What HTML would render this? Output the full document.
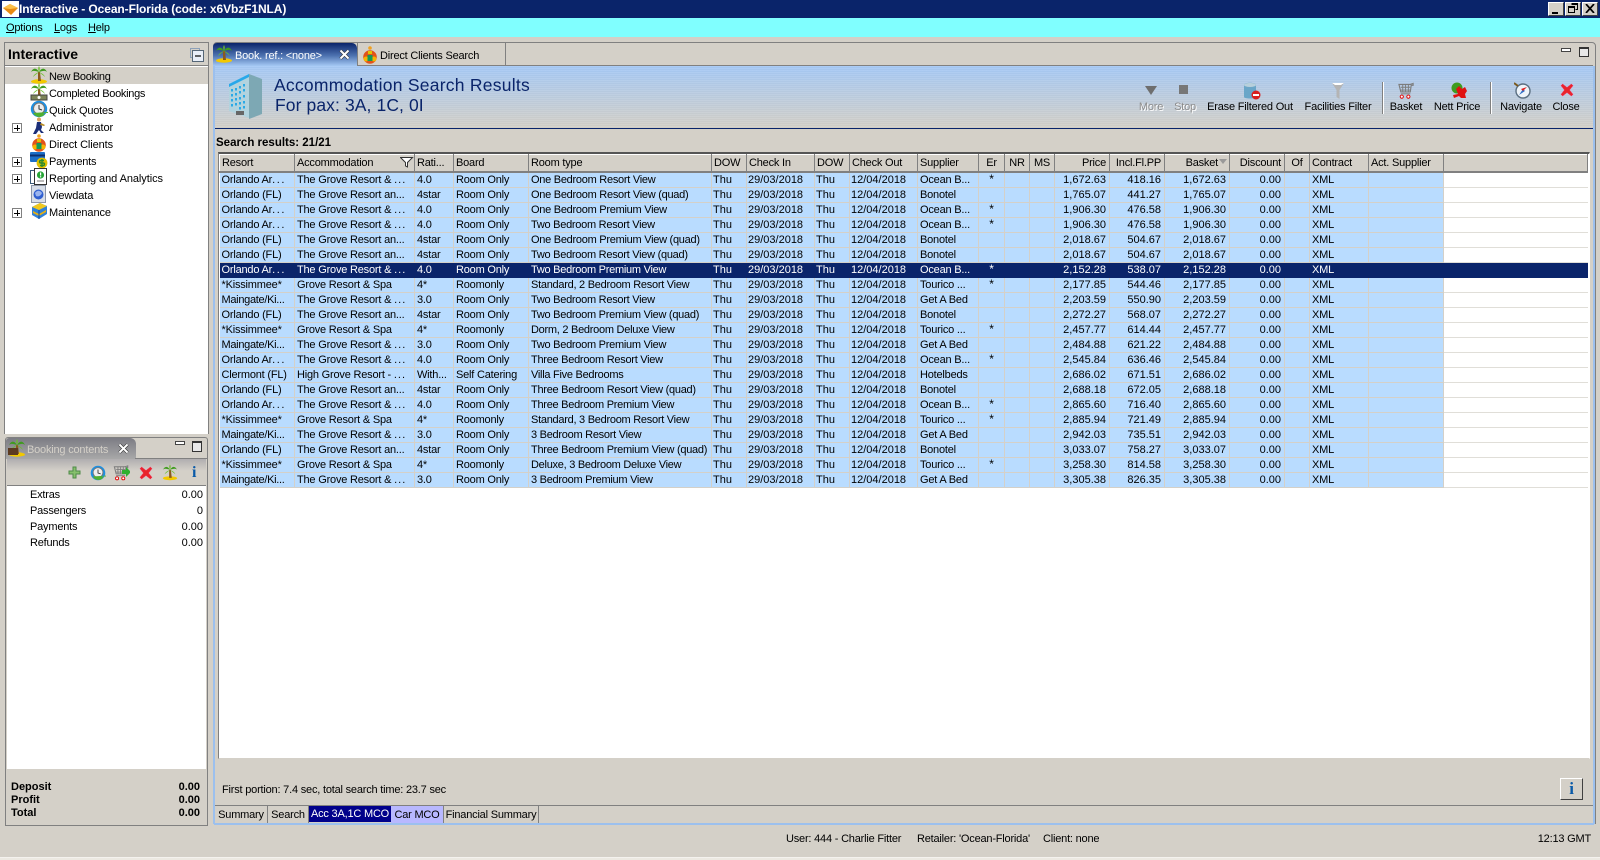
<!DOCTYPE html>
<html><head><meta charset="utf-8"><title>Interactive - Ocean-Florida</title>
<style>
html,body{margin:0;padding:0}
body{width:1600px;height:860px;overflow:hidden;background:#d4d0c8;position:relative;font:11px/15px "Liberation Sans",sans-serif;color:#000;letter-spacing:-.2px}
.a{position:absolute;white-space:nowrap}
u{text-decoration:underline}
.tree{left:49px;height:17px;line-height:17px}
.ic{position:absolute}
.pm{position:absolute;left:12px;width:8px;height:8px;border:1px solid #808080;background:#fff}
.pm:before{content:"";position:absolute;left:1px;right:1px;top:3.5px;height:1px;background:#000}
.pm:after{content:"";position:absolute;top:1px;bottom:1px;left:3.5px;width:1px;background:#000}
.wb{position:absolute;top:2px;width:14px;height:12px;background:#d4d0c8;border:1px solid;border-color:#fff #404040 #404040 #fff}
table{border-collapse:collapse;table-layout:fixed;position:absolute;left:219px;top:154px;width:1368px}
th,td{padding:0 2px;overflow:hidden;white-space:nowrap;text-align:left;font-weight:normal}
th{height:16px;background:#d4d0c8;border-right:1px solid #808080;border-left:1px solid #fff;border-top:1px solid #fff;border-bottom:2px solid #808080;line-height:15px;padding:0 2px}
td{height:14px;line-height:14px;background:#b9dcff;border-right:1px solid #d4d0c8;border-bottom:1px solid #d4d0c8}
td:last-child{background:#fff;border-bottom-color:#e0ded8;border-right-color:#fff}
tr.s td{background:#0a246a;color:#fff;border-color:#0a246a}
td:nth-child(n+6):nth-child(-n+9),td:nth-child(n+14):nth-child(-n+17){letter-spacing:0}
td:nth-child(n+6):nth-child(-n+9){padding-left:1px}
td:nth-child(5){letter-spacing:-.27px}
td:nth-child(n+14):nth-child(-n+17),th.r{text-align:right;padding-right:3px}
td:nth-child(11){text-align:center;vertical-align:top;line-height:13px;font-size:12px}
th.c{text-align:center}
td s{text-decoration:none;letter-spacing:1px}
td:first-child s{letter-spacing:1.6px}
.vt{position:absolute;right:3px}
.btab{position:absolute;top:805px;height:17px;line-height:17px;text-align:center;border-right:1px solid #808080}
.tb{position:absolute;top:100px;line-height:15px;text-align:center;transform:translateX(-50%);white-space:nowrap}
.dis{color:#8c8c8c;text-shadow:1px 1px 0 #fff}
.sep{position:absolute;top:82px;height:32px;width:1px;background:#808080;border-right:1px solid #fff}
.b{font-weight:bold;letter-spacing:0}
</style></head><body>
<svg width="0" height="0" style="position:absolute">
<defs>
<symbol id="palm" viewBox="0 0 18 18"><ellipse cx="9" cy="15.5" rx="8" ry="2.2" fill="#f2c800"/><path d="M8 6l2 0 1 9-3 0z" fill="#8a5a1e"/><path d="M9 6C6 1 3 2 1 6 3 4 6 5 9 6zM9 6C12 1 15 2 17 6 15 4 12 5 9 6z" fill="#3f9b1f"/><path d="M9 6C7 7 4 8 3 11 5 9 7 8 9 6zM9 6C11 7 14 8 15 11 13 9 11 8 9 6zM9 6C8 3 8 2 9 0 10 2 10 3 9 6z" fill="#6cc02c"/></symbol>
<symbol id="clock" viewBox="0 0 18 18"><circle cx="9" cy="9" r="8.2" fill="#1e8fe0"/><circle cx="9" cy="8.5" r="5.5" fill="#eee" stroke="#777"/><path d="M9 5v4l3 1" stroke="#333" fill="none"/><path d="M3 13c3 5 9 5 12 1l-2-1h5v-1" fill="#50b030"/></symbol>
<symbol id="man" viewBox="0 0 18 18"><circle cx="9" cy="2.5" r="2" fill="#d9a05c"/><path d="M7 5h4l1 5-1 3 3 3h-3l-2-3-3 4H3l3-6z" fill="#1b2e78"/><path d="M11 6l4 2-1 1-4-1z" fill="#b88a20"/></symbol>
<symbol id="client" viewBox="0 0 18 18"><circle cx="9" cy="2" r="1.8" fill="#f0a020"/><circle cx="9" cy="11" r="6.8" fill="#e2531a"/><circle cx="5" cy="13" r="2.5" fill="#f6b400"/><circle cx="13" cy="13" r="2.5" fill="#f6b400"/><rect x="6.5" y="9" width="5" height="6" fill="#139a5a"/><rect x="7" y="5" width="4" height="3" fill="#e2c400"/></symbol>
<symbol id="pay" viewBox="0 0 18 18"><rect x="0" y="1" width="15" height="10" rx="1" fill="#1c6fc8"/><rect x="0" y="3.5" width="15" height="2" fill="#0b2f70"/><circle cx="12" cy="12" r="5.4" fill="#e0c000"/><path d="M14 9.5h-3c-2 0-2 2.5 0 2.5h2c2 0 2 2.5 0 2.5h-3M12 8v8" stroke="#2d8a2d" stroke-width="1.4" fill="none"/></symbol>
<symbol id="rep" viewBox="0 0 18 18"><rect x="0.5" y="2.5" width="9" height="13" fill="#fff" stroke="#3a5a78"/><rect x="4.5" y="0.5" width="12" height="16" fill="#fff" stroke="#333"/><circle cx="10.5" cy="7" r="3.6" fill="#27a536"/><rect x="10" y="4.5" width="1.2" height="3" fill="#fff"/><rect x="10" y="8.2" width="1.2" height="1.2" fill="#fff"/><path d="M7 13h7" stroke="#777"/></symbol>
<symbol id="view" viewBox="0 0 18 18"><rect x="1.5" y="0.5" width="14" height="17" fill="#d8dee8" stroke="#8c96a8"/><circle cx="8.5" cy="9.5" r="5" fill="#2f5fd0"/><path d="M5 8c2-3 5-3 7 0-1 3-4 4-6 3z" fill="#9ab4ee"/></symbol>
<symbol id="maint" viewBox="0 0 18 18"><path d="M2 5l8-4 7 3v8l-8 5-7-4z" fill="#2f80d8"/><path d="M2 5l7 3 8-4-7-3z" fill="#f0c81e"/><path d="M3 9l6 3 7-4v2l-7 4-6-3z" fill="#e8b010"/><path d="M9 8v9" stroke="#0c4a9a"/></symbol>
<symbol id="cash" viewBox="0 0 18 18"><rect x="1" y="12" width="16" height="5" fill="#7c8458" stroke="#444"/><circle cx="9" cy="14.5" r="1.5" fill="#fff"/></symbol>
<symbol id="x" viewBox="0 0 16 16"><path d="M3 1l5 4 5-4 2 2-4 5 4 5-2 2-5-4-5 4-2-2 4-5-4-5z" fill="#e8252c" stroke="#f48" stroke-width=".4"/></symbol>
<symbol id="cart" viewBox="0 0 18 18"><path d="M1 2h12l3-1v2l-2 0-1 7H3z" fill="none" stroke="#7d7d7d" stroke-width="1.2"/><path d="M3 5h10M5 2v8M8 2v8M11 2v8M3 8h10" stroke="#7d7d7d"/><path d="M3 12h10" stroke="#7d7d7d"/><circle cx="4" cy="15" r="1.7" fill="#fff" stroke="#e00000"/><circle cx="11" cy="15" r="1.7" fill="#fff" stroke="#e00000"/></symbol>
<symbol id="bstack" viewBox="0 0 34 47"><path d="M1 11L21 1v44L1 38z" fill="#b2d3de"/><path d="M21 1l13 5v35l-13 5z" fill="#7da8b4"/><path d="M1 11L21 1v3L1 14z" fill="#28a8ea"/><g fill="#2aa9e6"><rect x="3" y="16" width="2" height="2.5"/><rect x="7" y="15" width="2" height="2.5"/><rect x="11" y="13" width="2" height="2.5"/><rect x="15" y="11" width="2" height="2.5"/><rect x="3" y="21" width="2" height="2.5"/><rect x="7" y="20" width="2" height="2.5"/><rect x="11" y="18" width="2" height="2.5"/><rect x="15" y="16" width="2" height="2.5"/><rect x="3" y="26" width="2" height="2.5"/><rect x="7" y="25" width="2" height="2.5"/><rect x="11" y="24" width="2" height="2.5"/><rect x="15" y="22" width="2" height="2.5"/><rect x="3" y="31" width="2" height="2.5"/><rect x="7" y="30" width="2" height="2.5"/><rect x="11" y="29" width="2" height="2.5"/><rect x="15" y="28" width="2" height="2.5"/><rect x="15" y="33" width="2" height="2.5"/><rect x="11" y="34" width="2" height="2.5"/></g><path d="M8 38h8v4H8z" fill="#666"/></symbol>
</defs></svg>

<!-- title bar -->
<div class="a" style="left:0;top:0;width:1600px;height:18px;background:#0a246a"></div>
<svg class="ic" style="left:2px;top:1px" width="17" height="16" viewBox="0 0 17 16"><rect width="17" height="16" fill="#fff"/><path d="M1 7l7-4 8 4-7 7z" fill="#e88a12"/><path d="M1 7l7-4 8 4-8 1z" fill="#fbc04a"/></svg>
<div class="a" style="left:19px;top:2px;line-height:15px;color:#fff;font-weight:bold;font-size:12px;letter-spacing:-.09px">Interactive - Ocean-Florida (code: x6VbzF1NLA)</div>
<div class="wb" style="left:1548px"><div style="position:absolute;left:3px;bottom:1px;width:6px;height:2px;background:#000"></div></div>
<div class="wb" style="left:1565px"><svg style="position:absolute;left:2px;top:0" width="10" height="10"><path d="M3.5 .5h6v6h-2M.5 3.5h6v6h-6zM.5 4.5h6M3.5 1.5h6" fill="none" stroke="#000"/></svg></div>
<div class="wb" style="left:1582px"><svg style="position:absolute;left:2px;top:1px" width="10" height="9"><path d="M1 0l8 9M9 0l-8 9" stroke="#000" stroke-width="1.7"/></svg></div>

<!-- menu -->
<div class="a" style="left:0;top:18px;width:1600px;height:19px;background:#80ffff"></div>
<div class="a" style="left:6px;top:21px"><u>O</u>ptions</div>
<div class="a" style="left:54px;top:21px"><u>L</u>ogs</div>
<div class="a" style="left:88px;top:21px"><u>H</u>elp</div>

<!-- left top panel -->
<div class="a" style="left:4px;top:42px;width:203px;height:391px;background:#fff;border:1px solid #808080;border-bottom:0"></div>
<div class="a" style="left:5px;top:43px;width:203px;height:22px;background:#d4d0c8;border-bottom:1px solid #808080"></div>
<div class="a" style="left:8px;top:46px;line-height:17px;font-weight:bold;font-size:14px;letter-spacing:0">Interactive</div>
<svg class="ic" style="left:190px;top:48px" width="14" height="14"><path d="M.5.5h9v9h-9z" fill="#d4d0c8" stroke="#8ca0b8"/><path d="M2.5 2.5h11v11h-11z" fill="#e8eef8" stroke="#567"/><path d="M5 8h6" stroke="#000" stroke-width="1.2"/></svg>
<div class="a" style="left:5px;top:67px;width:203px;height:17px;background:#d4d0c8"></div>
<svg class="ic" style="left:30px;top:66px" width="18" height="18"><use href="#palm"/></svg>
<svg class="ic" style="left:30px;top:83px" width="18" height="18"><use href="#palm"/><use href="#cash"/></svg>
<svg class="ic" style="left:30px;top:100px" width="18" height="18"><use href="#clock"/></svg>
<svg class="ic" style="left:30px;top:117px" width="18" height="18"><use href="#man"/></svg>
<svg class="ic" style="left:30px;top:134px" width="18" height="18"><use href="#client"/></svg>
<svg class="ic" style="left:30px;top:151px" width="18" height="18"><use href="#pay"/></svg>
<svg class="ic" style="left:30px;top:168px" width="18" height="18"><use href="#rep"/></svg>
<svg class="ic" style="left:30px;top:185px" width="18" height="18"><use href="#view"/></svg>
<svg class="ic" style="left:30px;top:202px" width="18" height="18"><use href="#maint"/></svg>
<div class="pm" style="top:123px"></div><div class="pm" style="top:157px"></div><div class="pm" style="top:174px"></div><div class="pm" style="top:208px"></div>
<div class="a tree" style="top:69px;letter-spacing:-.3px">New Booking</div>
<div class="a tree" style="top:86px;letter-spacing:-.3px">Completed Bookings</div>
<div class="a tree" style="top:103px">Quick Quotes</div>
<div class="a tree" style="top:120px;letter-spacing:-.05px">Administrator</div>
<div class="a tree" style="top:137px;letter-spacing:-.1px">Direct Clients</div>
<div class="a tree" style="top:154px">Payments</div>
<div class="a tree" style="top:171px;letter-spacing:-.07px">Reporting and Analytics</div>
<div class="a tree" style="top:188px;letter-spacing:-.1px">Viewdata</div>
<div class="a tree" style="top:205px;letter-spacing:-.1px">Maintenance</div>

<!-- left bottom panel -->
<div class="a" style="left:5px;top:437px;width:201px;height:387px;border:1px solid #808080;border-radius:3px 3px 0 0;background:#d4d0c8"></div>
<div class="a" style="left:6px;top:438px;width:130px;height:21px;background:linear-gradient(#7c7c84,#a8a8a8);border-radius:3px 6px 0 0"></div>
<div class="a" style="left:135px;top:458px;width:72px;height:1px;background:#808080"></div>
<svg class="ic" style="left:8px;top:439px" width="18" height="18"><use href="#palm"/><rect x="0" y="9" width="10" height="7" fill="#5c3a20"/></svg>
<div class="a" style="left:27px;top:443px;color:#d4d0c8">Booking contents</div>
<svg class="ic" style="left:118px;top:443px" width="11" height="11"><path d="M1.5 1.5l8 8M9.5 1.5l-8 8" stroke="#333" stroke-width="3.2"/><path d="M1.5 1.5l8 8M9.5 1.5l-8 8" stroke="#fff" stroke-width="2"/></svg>
<div class="a" style="left:175px;top:441px;width:8px;height:2px;border:1px solid #444;background:#fff"></div>
<div class="a" style="left:192px;top:441px;width:8px;height:8px;border:1px solid #333;border-top:2px solid #333;background:#e8e8e8"></div>
<div class="a" style="left:7px;top:459px;width:199px;height:26px;background:linear-gradient(#b0aeb0,#d4d0c8 45%);border-bottom:1px solid #808080"></div>
<svg class="ic" style="left:68px;top:466px" width="13" height="13"><path d="M5 1h3v4h4v3H8v4H5V8H1V5h4z" fill="#86c06c" stroke="#4e8a48"/></svg>
<svg class="ic" style="left:90px;top:465px" width="16" height="16"><use href="#clock"/></svg>
<svg class="ic" style="left:113px;top:465px" width="17" height="16"><use href="#cart"/><path d="M9 5h4V2l5 5-5 5V9H9z" fill="#2fb030" transform="translate(0,0)"/></svg>
<svg class="ic" style="left:139px;top:466px" width="14" height="14"><use href="#x"/></svg>
<svg class="ic" style="left:162px;top:464px" width="16" height="17"><use href="#palm"/></svg>
<div class="a" style="left:192px;top:464px;color:#0a5aa8;font:bold 16px/17px 'Liberation Serif',serif">i</div>
<div class="a" style="left:7px;top:486px;width:199px;height:283px;background:#fff"></div>
<div class="a" style="left:30px;top:488px">Extras</div><div class="a" style="right:1397px;top:488px;letter-spacing:0">0.00</div>
<div class="a" style="left:30px;top:504px">Passengers</div><div class="a" style="right:1397px;top:504px;letter-spacing:0">0</div>
<div class="a" style="left:30px;top:520px">Payments</div><div class="a" style="right:1397px;top:520px;letter-spacing:0">0.00</div>
<div class="a" style="left:30px;top:536px">Refunds</div><div class="a" style="right:1397px;top:536px;letter-spacing:0">0.00</div>
<div class="a b" style="left:11px;top:781px;line-height:13px">Deposit<br>Profit<br>Total</div>
<div class="a b" style="right:1400px;top:781px;line-height:13px;text-align:right">0.00<br>0.00<br>0.00</div>

<!-- main panel -->
<div class="a" style="left:213px;top:42px;width:1381px;height:780px;border:1px solid #808080;border-radius:4px 4px 0 0;background:#d4d0c8"></div>
<div class="a" style="left:214px;top:65px;width:1379px;height:1px;background:#808080"></div>
<div class="a" style="left:214px;top:823px;width:1380px;height:2px;background:#9cc0ee"></div>
<div class="a" style="left:1593px;top:66px;width:2px;height:758px;background:#9cc0ee"></div>
<div class="a" style="left:213px;top:66px;width:2px;height:758px;background:#9cc0ee"></div>
<!-- tabs -->
<div class="a" style="left:213px;top:43px;width:144px;height:23px;background:linear-gradient(#0a246a,#4d72b0 55%,#a4c8f4);border-radius:4px 5px 0 0"></div>
<div class="a" style="left:357px;top:43px;width:1px;height:23px;background:#808080"></div>
<div class="a" style="left:505px;top:43px;width:1px;height:22px;background:#808080"></div>
<svg class="ic" style="left:215px;top:45px" width="18" height="18"><use href="#palm"/></svg>
<div class="a" style="left:235px;top:49px;color:#fff">Book. ref.: &lt;none&gt;</div>
<svg class="ic" style="left:339px;top:49px" width="11" height="11"><path d="M1.5 1.5l8 8M9.5 1.5l-8 8" stroke="#333" stroke-width="3.2"/><path d="M1.5 1.5l8 8M9.5 1.5l-8 8" stroke="#fff" stroke-width="2"/></svg>
<svg class="ic" style="left:361px;top:46px" width="18" height="18"><use href="#client"/></svg>
<div class="a" style="left:380px;top:49px">Direct Clients Search</div>
<div class="a" style="left:1561px;top:48px;width:8px;height:2px;border:1px solid #444;background:#fff"></div>
<div class="a" style="left:1579px;top:47px;width:8px;height:7px;border:1px solid #333;border-top:2px solid #333;background:#e8e8e8"></div>
<!-- banner -->
<div class="a" style="left:215px;top:66px;width:1378px;height:62px;background:repeating-linear-gradient(rgba(255,255,255,.06) 0 1px,rgba(0,0,0,.015) 1px 2px),linear-gradient(#a6c9f5,#d4d0c8)"></div>
<div class="a" style="left:215px;top:128px;width:1378px;height:1px;background:#0a246a"></div>
<svg class="ic" style="left:228px;top:73px" width="34" height="47"><use href="#bstack"/></svg>
<div class="a" style="left:274px;top:75px;line-height:21px;font-size:17.5px;color:#0a246a;letter-spacing:.25px">Accommodation Search Results</div>
<div class="a" style="left:275px;top:95px;line-height:21px;font-size:17.5px;color:#0a246a;letter-spacing:.1px">For pax: 3A, 1C, 0I</div>
<!-- toolbar -->
<svg class="ic" style="left:1145px;top:84px" width="12" height="12"><path d="M0 2h12l-6 9z" fill="#6e6e6e"/></svg>
<div class="a" style="left:1179px;top:85px;width:9px;height:9px;background:#777"></div>
<svg class="ic" style="left:1244px;top:82px" width="17" height="18"><path d="M0 3c0-3 12-3 12 0v12c0 2-12 2-12 0z" fill="#6aa6c8"/><ellipse cx="6" cy="3" rx="6" ry="2" fill="#b8d0dc"/><circle cx="12" cy="13" r="4.5" fill="#d82020"/><rect x="9" y="12" width="6" height="2" fill="#fff"/></svg>
<svg class="ic" style="left:1332px;top:82px" width="12" height="18"><path d="M0 1h12L7.5 8v9l-3-2V8z" fill="#b4b4b4"/><path d="M0 1h12l-3 2H3z" fill="#fff"/></svg>
<svg class="ic" style="left:1398px;top:82px" width="17" height="18"><use href="#cart"/></svg>
<svg class="ic" style="left:1450px;top:82px" width="17" height="17"><circle cx="7" cy="6" r="5.5" fill="#3f9b1f"/><path d="M6 7l3-3 3 3 3-2 2 4-2 3 1 4h-5l-2-2-5 2-1-3 5-1z" fill="#e01010"/></svg>
<svg class="ic" style="left:1514px;top:82px" width="17" height="17"><circle cx="9" cy="9" r="7" fill="#eef4fa" stroke="#5a6e80" stroke-width="1.4"/><path d="M5 13l6-4-2-2z" fill="#2f6fc8"/><path d="M13 5l-4 4-2-2z" fill="#e02020"/><path d="M0 1l4 3" stroke="#7a5a20" stroke-width="2"/></svg>
<svg class="ic" style="left:1560px;top:83px" width="14" height="14"><use href="#x"/></svg>
<div class="a tb dis" style="left:1151px">More</div>
<div class="a tb dis" style="left:1185px">Stop</div>
<div class="a tb" style="left:1250px">Erase Filtered Out</div>
<div class="a tb" style="left:1338px">Facilities Filter</div>
<div class="sep" style="left:1382px"></div>
<div class="a tb" style="left:1406px">Basket</div>
<div class="a tb" style="left:1457px">Nett Price</div>
<div class="sep" style="left:1490px"></div>
<div class="a tb" style="left:1521px">Navigate</div>
<div class="a tb" style="left:1566px">Close</div>

<div class="a b" style="left:216px;top:136px;line-height:14px;font-size:11.5px">Search results: 21/21</div>
<!-- grid -->
<div class="a" style="left:218px;top:152px;width:1370px;height:604px;background:#fff;border:1px solid #808080;border-top:2px solid #555;border-right-color:#fff;border-bottom-color:#d4d0c8"></div>
<table>
<colgroup><col style="width:75px"><col style="width:120px"><col style="width:39px"><col style="width:75px"><col style="width:183px"><col style="width:35px"><col style="width:68px"><col style="width:35px"><col style="width:68px"><col style="width:61px"><col style="width:26px"><col style="width:25px"><col style="width:25px"><col style="width:55px"><col style="width:55px"><col style="width:65px"><col style="width:55px"><col style="width:25px"><col style="width:59px"><col style="width:75px"><col style="width:144px"></colgroup>
<thead><tr><th>Resort</th><th>Accommodation<svg style="position:absolute;left:180px;top:2px" width="14" height="11"><path d="M.5.5h12L7.5 5.5v4.5l-2-1V5.5z" fill="#fff" stroke="#333"/></svg></th><th>Rati...</th><th>Board</th><th>Room type</th><th>DOW</th><th>Check In</th><th>DOW</th><th>Check Out</th><th>Supplier</th><th class="c">Er</th><th class="c">NR</th><th class="c">MS</th><th class="r">Price</th><th class="r">Incl.Fl.PP</th><th class="r" style="padding-right:11px;position:relative">Basket<svg style="position:absolute;right:2px;top:4px" width="8" height="5"><path d="M0 0h8L4 5z" fill="#999"/></svg></th><th class="r">Discount</th><th class="c">Of</th><th>Contract</th><th>Act. Supplier</th><th></th></tr></thead>
<tbody>
<tr><td>Orlando Ar<s>...</s></td><td>The Grove Resort &amp; <s>...</s></td><td>4.0</td><td>Room Only</td><td>One Bedroom Resort View</td><td>Thu</td><td>29/03/2018</td><td>Thu</td><td>12/04/2018</td><td>Ocean B...</td><td>*</td><td></td><td></td><td>1,672.63</td><td>418.16</td><td>1,672.63</td><td>0.00</td><td></td><td>XML</td><td></td><td></td></tr>
<tr><td>Orlando (FL)</td><td>The Grove Resort an...</td><td>4star</td><td>Room Only</td><td>One Bedroom Resort View (quad)</td><td>Thu</td><td>29/03/2018</td><td>Thu</td><td>12/04/2018</td><td>Bonotel</td><td></td><td></td><td></td><td>1,765.07</td><td>441.27</td><td>1,765.07</td><td>0.00</td><td></td><td>XML</td><td></td><td></td></tr>
<tr><td>Orlando Ar<s>...</s></td><td>The Grove Resort &amp; <s>...</s></td><td>4.0</td><td>Room Only</td><td>One Bedroom Premium View</td><td>Thu</td><td>29/03/2018</td><td>Thu</td><td>12/04/2018</td><td>Ocean B...</td><td>*</td><td></td><td></td><td>1,906.30</td><td>476.58</td><td>1,906.30</td><td>0.00</td><td></td><td>XML</td><td></td><td></td></tr>
<tr><td>Orlando Ar<s>...</s></td><td>The Grove Resort &amp; <s>...</s></td><td>4.0</td><td>Room Only</td><td>Two Bedroom Resort View</td><td>Thu</td><td>29/03/2018</td><td>Thu</td><td>12/04/2018</td><td>Ocean B...</td><td>*</td><td></td><td></td><td>1,906.30</td><td>476.58</td><td>1,906.30</td><td>0.00</td><td></td><td>XML</td><td></td><td></td></tr>
<tr><td>Orlando (FL)</td><td>The Grove Resort an...</td><td>4star</td><td>Room Only</td><td>One Bedroom Premium View (quad)</td><td>Thu</td><td>29/03/2018</td><td>Thu</td><td>12/04/2018</td><td>Bonotel</td><td></td><td></td><td></td><td>2,018.67</td><td>504.67</td><td>2,018.67</td><td>0.00</td><td></td><td>XML</td><td></td><td></td></tr>
<tr><td>Orlando (FL)</td><td>The Grove Resort an...</td><td>4star</td><td>Room Only</td><td>Two Bedroom Resort View (quad)</td><td>Thu</td><td>29/03/2018</td><td>Thu</td><td>12/04/2018</td><td>Bonotel</td><td></td><td></td><td></td><td>2,018.67</td><td>504.67</td><td>2,018.67</td><td>0.00</td><td></td><td>XML</td><td></td><td></td></tr>
<tr class="s"><td>Orlando Ar<s>...</s></td><td>The Grove Resort &amp; <s>...</s></td><td>4.0</td><td>Room Only</td><td>Two Bedroom Premium View</td><td>Thu</td><td>29/03/2018</td><td>Thu</td><td>12/04/2018</td><td>Ocean B...</td><td>*</td><td></td><td></td><td>2,152.28</td><td>538.07</td><td>2,152.28</td><td>0.00</td><td></td><td>XML</td><td></td><td style="background:#0a246a"></td></tr>
<tr><td>*Kissimmee*</td><td>Grove Resort &amp; Spa</td><td>4*</td><td>Roomonly</td><td>Standard, 2 Bedroom Resort View</td><td>Thu</td><td>29/03/2018</td><td>Thu</td><td>12/04/2018</td><td>Tourico ...</td><td>*</td><td></td><td></td><td>2,177.85</td><td>544.46</td><td>2,177.85</td><td>0.00</td><td></td><td>XML</td><td></td><td></td></tr>
<tr><td style="letter-spacing:-.3px">Maingate/Ki...</td><td>The Grove Resort &amp; <s>...</s></td><td>3.0</td><td>Room Only</td><td>Two Bedroom Resort View</td><td>Thu</td><td>29/03/2018</td><td>Thu</td><td>12/04/2018</td><td>Get A Bed</td><td></td><td></td><td></td><td>2,203.59</td><td>550.90</td><td>2,203.59</td><td>0.00</td><td></td><td>XML</td><td></td><td></td></tr>
<tr><td>Orlando (FL)</td><td>The Grove Resort an...</td><td>4star</td><td>Room Only</td><td>Two Bedroom Premium View (quad)</td><td>Thu</td><td>29/03/2018</td><td>Thu</td><td>12/04/2018</td><td>Bonotel</td><td></td><td></td><td></td><td>2,272.27</td><td>568.07</td><td>2,272.27</td><td>0.00</td><td></td><td>XML</td><td></td><td></td></tr>
<tr><td>*Kissimmee*</td><td>Grove Resort &amp; Spa</td><td>4*</td><td>Roomonly</td><td>Dorm, 2 Bedroom Deluxe View</td><td>Thu</td><td>29/03/2018</td><td>Thu</td><td>12/04/2018</td><td>Tourico ...</td><td>*</td><td></td><td></td><td>2,457.77</td><td>614.44</td><td>2,457.77</td><td>0.00</td><td></td><td>XML</td><td></td><td></td></tr>
<tr><td style="letter-spacing:-.3px">Maingate/Ki...</td><td>The Grove Resort &amp; <s>...</s></td><td>3.0</td><td>Room Only</td><td>Two Bedroom Premium View</td><td>Thu</td><td>29/03/2018</td><td>Thu</td><td>12/04/2018</td><td>Get A Bed</td><td></td><td></td><td></td><td>2,484.88</td><td>621.22</td><td>2,484.88</td><td>0.00</td><td></td><td>XML</td><td></td><td></td></tr>
<tr><td>Orlando Ar<s>...</s></td><td>The Grove Resort &amp; <s>...</s></td><td>4.0</td><td>Room Only</td><td>Three Bedroom Resort View</td><td>Thu</td><td>29/03/2018</td><td>Thu</td><td>12/04/2018</td><td>Ocean B...</td><td>*</td><td></td><td></td><td>2,545.84</td><td>636.46</td><td>2,545.84</td><td>0.00</td><td></td><td>XML</td><td></td><td></td></tr>
<tr><td>Clermont (FL)</td><td>High Grove Resort - <s>...</s></td><td>With...</td><td>Self Catering</td><td>Villa Five Bedrooms</td><td>Thu</td><td>29/03/2018</td><td>Thu</td><td>12/04/2018</td><td>Hotelbeds</td><td></td><td></td><td></td><td>2,686.02</td><td>671.51</td><td>2,686.02</td><td>0.00</td><td></td><td>XML</td><td></td><td></td></tr>
<tr><td>Orlando (FL)</td><td>The Grove Resort an...</td><td>4star</td><td>Room Only</td><td>Three Bedroom Resort View (quad)</td><td>Thu</td><td>29/03/2018</td><td>Thu</td><td>12/04/2018</td><td>Bonotel</td><td></td><td></td><td></td><td>2,688.18</td><td>672.05</td><td>2,688.18</td><td>0.00</td><td></td><td>XML</td><td></td><td></td></tr>
<tr><td>Orlando Ar<s>...</s></td><td>The Grove Resort &amp; <s>...</s></td><td>4.0</td><td>Room Only</td><td>Three Bedroom Premium View</td><td>Thu</td><td>29/03/2018</td><td>Thu</td><td>12/04/2018</td><td>Ocean B...</td><td>*</td><td></td><td></td><td>2,865.60</td><td>716.40</td><td>2,865.60</td><td>0.00</td><td></td><td>XML</td><td></td><td></td></tr>
<tr><td>*Kissimmee*</td><td>Grove Resort &amp; Spa</td><td>4*</td><td>Roomonly</td><td>Standard, 3 Bedroom Resort View</td><td>Thu</td><td>29/03/2018</td><td>Thu</td><td>12/04/2018</td><td>Tourico ...</td><td>*</td><td></td><td></td><td>2,885.94</td><td>721.49</td><td>2,885.94</td><td>0.00</td><td></td><td>XML</td><td></td><td></td></tr>
<tr><td style="letter-spacing:-.3px">Maingate/Ki...</td><td>The Grove Resort &amp; <s>...</s></td><td>3.0</td><td>Room Only</td><td>3 Bedroom Resort View</td><td>Thu</td><td>29/03/2018</td><td>Thu</td><td>12/04/2018</td><td>Get A Bed</td><td></td><td></td><td></td><td>2,942.03</td><td>735.51</td><td>2,942.03</td><td>0.00</td><td></td><td>XML</td><td></td><td></td></tr>
<tr><td>Orlando (FL)</td><td>The Grove Resort an...</td><td>4star</td><td>Room Only</td><td>Three Bedroom Premium View (quad)</td><td>Thu</td><td>29/03/2018</td><td>Thu</td><td>12/04/2018</td><td>Bonotel</td><td></td><td></td><td></td><td>3,033.07</td><td>758.27</td><td>3,033.07</td><td>0.00</td><td></td><td>XML</td><td></td><td></td></tr>
<tr><td>*Kissimmee*</td><td>Grove Resort &amp; Spa</td><td>4*</td><td>Roomonly</td><td>Deluxe, 3 Bedroom Deluxe View</td><td>Thu</td><td>29/03/2018</td><td>Thu</td><td>12/04/2018</td><td>Tourico ...</td><td>*</td><td></td><td></td><td>3,258.30</td><td>814.58</td><td>3,258.30</td><td>0.00</td><td></td><td>XML</td><td></td><td></td></tr>
<tr><td style="letter-spacing:-.3px">Maingate/Ki...</td><td>The Grove Resort &amp; <s>...</s></td><td>3.0</td><td>Room Only</td><td>3 Bedroom Premium View</td><td>Thu</td><td>29/03/2018</td><td>Thu</td><td>12/04/2018</td><td>Get A Bed</td><td></td><td></td><td></td><td>3,305.38</td><td>826.35</td><td>3,305.38</td><td>0.00</td><td></td><td>XML</td><td></td><td></td></tr>
</tbody></table>
<!-- bottom -->
<div class="a" style="left:222px;top:783px">First portion: 7.4 sec, total search time: 23.7 sec</div>
<div class="a" style="left:1560px;top:778px;width:21px;height:20px;background:#d4d0c8;border:1px solid;border-color:#fff #404040 #404040 #fff;text-align:center;color:#0a5aa8;font:bold 17px/20px 'Liberation Serif',serif">i</div>
<div class="a" style="left:215px;top:805px;width:1378px;height:1px;background:#808080"></div>
<div class="btab" style="left:215px;width:52px;top:806px;line-height:18px">Summary</div>
<div class="btab" style="left:268px;width:40px;top:806px;line-height:18px">Search</div>
<div class="btab" style="left:309px;width:82px;top:806px;background:#00008b;color:#fff;height:16px;line-height:17px;border:0">Acc 3A,1C MCO</div>
<div class="btab" style="left:391px;width:52px;top:806px;background:#b8b8ff;line-height:18px">Car MCO</div>
<div class="btab" style="left:444px;width:94px;top:806px;line-height:18px">Financial Summary</div>
<!-- status -->
<div class="a" style="left:786px;top:832px">User: 444 - Charlie Fitter</div>
<div class="a" style="left:917px;top:832px">Retailer: 'Ocean-Florida'</div>
<div class="a" style="left:1043px;top:832px">Client: none</div>
<div class="a" style="right:9px;top:832px">12:13 GMT</div>
<div class="a" style="left:0;top:857px;width:1600px;height:3px;background:#ece9e2;border-top:1px solid #f4f2ee;box-sizing:border-box"></div>
</body></html>
